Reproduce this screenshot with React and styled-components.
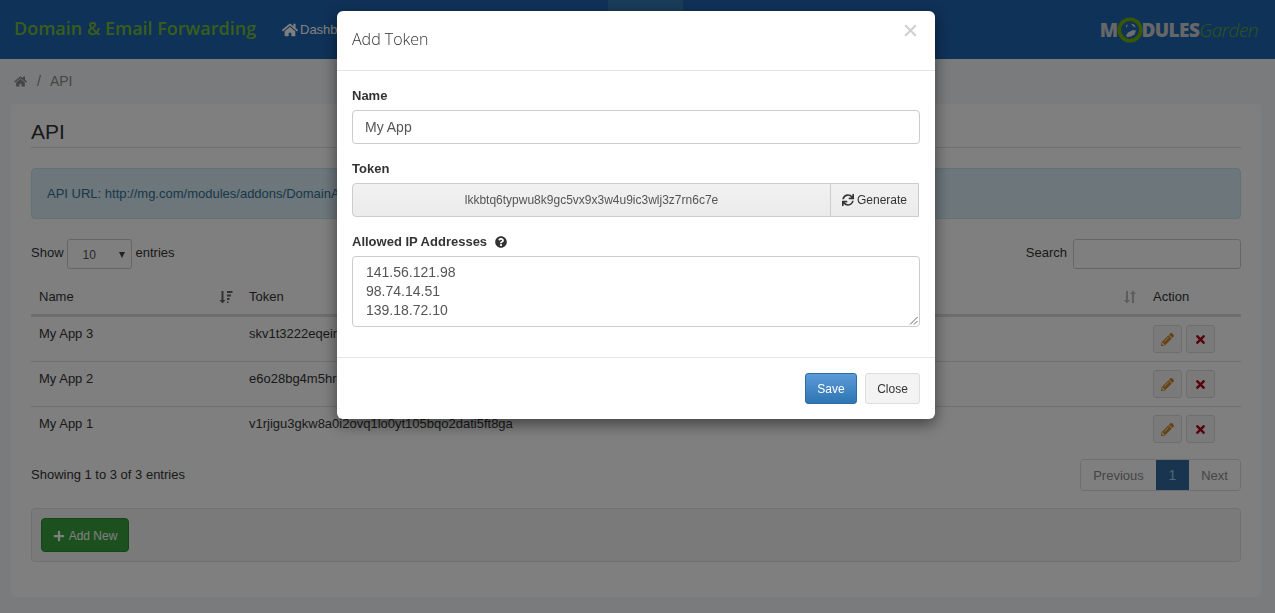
import React from 'react';
import styled, { createGlobalStyle } from 'styled-components';
import { FaHome, FaSync, FaPencilAlt, FaTimes, FaPlus, FaQuestionCircle } from 'react-icons/fa';
import { X } from 'lucide-react';

const GlobalStyle = createGlobalStyle`
  html, body {
    margin: 0;
    padding: 0;
    height: 100%;
    overflow: hidden;
    background: #f5f7fa;
    font-family: "Liberation Sans", Arial, sans-serif;
    font-size: 14px;
    color: #333;
  }
  * { box-sizing: border-box; }
`;

const Page = styled.div`
  height: 613px;
  display: flex;
  flex-direction: column;
`;

const TopBar = styled.header`
  height: 59px;
  flex: none;
  background: #1f64b0;
  display: flex;
  align-items: center;
  padding: 0 16px 0 14px;
`;

const Brand = styled.div`
  font-family: "Open Sans", sans-serif;
  font-weight: 600;
  font-size: 18px;
  color: #76bb36;
  width: 268px;
  flex: none;
  padding-bottom: 3px;
  white-space: nowrap;
`;

const NavList = styled.nav`
  display: flex;
  align-self: stretch;
  flex: 1;
`;

const NavItem = styled.a`
  display: flex;
  align-items: center;
  gap: 2px;
  color: #fff;
  font-size: 13px;
  height: 100%;
  width: ${(p) => p.$width}px;
  margin-left: ${(p) => p.$offset || 0}px;
  background: ${(p) => (p.$active ? '#3479b4' : 'transparent')};
  svg { font-size: 16px; }
`;

const Logo = styled.div`
  display: flex;
  align-items: center;
  flex: none;
  height: 26px;
  margin-right: 1px;
  color: #cfcfcf;
  font-family: "Open Sans", sans-serif;
  font-weight: 800;
  font-size: 19px;
  letter-spacing: -0.6px;
`;

const LogoRing = styled.svg`
  flex: none;
  margin-right: -2px;
`;

const LogoGarden = styled.span`
  color: #6aa82a;
  font-weight: 300;
  font-style: italic;
  font-size: 19px;
  letter-spacing: -0.5px;
`;

const Crumbs = styled.div`
  height: 45px;
  flex: none;
  display: flex;
  align-items: center;
  padding: 0 0 1px 14px;
  gap: 10px;
  color: #8a8a8a;
  font-size: 14px;
`;

const CrumbCurrent = styled.span`
  margin-left: -1px;
`;

const Panel = styled.main`
  margin: 0 14px 0 11px;
  height: 493px;
  flex: none;
  background: #fff;
  border-radius: 4px;
  padding: 0 20px;
`;

const PanelTitle = styled.h1`
  margin: 0;
  height: 44px;
  padding-top: 16px;
  font-size: 21px;
  line-height: 24px;
  font-weight: 400;
  color: #333;
  border-bottom: 1px solid #ddd;
`;

const Alert = styled.div`
  margin-top: 20px;
  height: 51px;
  display: flex;
  align-items: center;
  padding: 0 15px;
  background: #d9edf7;
  border: 1px solid #bce8f1;
  border-radius: 4px;
  color: #31708f;
  font-size: 13px;
`;

const ControlsRow = styled.div`
  margin-top: 20px;
  height: 30px;
  display: flex;
  justify-content: space-between;
  align-items: flex-start;
  font-size: 13px;
  line-height: 27px;
`;

const ControlGroup = styled.label`
  display: flex;
  align-items: flex-start;
  gap: 3px;
`;

const EntriesSelect = styled.div`
  width: 65px;
  height: 30px;
  margin-right: 1px;
  border: 1px solid #ccc;
  border-radius: 3px;
  display: flex;
  align-items: center;
  justify-content: space-between;
  padding: 2px 6px 0 15px;
  font-size: 12px;
  color: #555;
  background: #fff;
`;

const SelectCaret = styled.span`
  width: 0;
  height: 0;
  border-left: 3.5px solid transparent;
  border-right: 3.5px solid transparent;
  border-top: 6px solid #444;
`;

const SearchBox = styled.div`
  width: 168px;
  height: 30px;
  margin-left: 3px;
  border: 1px solid #ccc;
  border-radius: 3px;
  background: #fff;
`;

const TABLE_COLS = '210px 1fr 96px';

const TableHead = styled.div`
  margin-top: 12px;
  height: 36px;
  display: grid;
  grid-template-columns: ${TABLE_COLS};
  align-items: center;
  border-bottom: 3px solid #ddd;
  font-size: 13px;
  padding-bottom: 2px;
`;

const HeadCell = styled.div`
  display: flex;
  align-items: center;
  justify-content: space-between;
  padding: 0 8px;
`;

const SortIcon = styled.svg`
  width: 14px;
  height: 14px;
  flex: none;
  color: ${(p) => (p.$on ? '#666' : '#bbb')};
`;

const TableRow = styled.div`
  height: 45px;
  display: grid;
  grid-template-columns: ${TABLE_COLS};
  border-bottom: 1px solid ${(p) => (p.$last ? 'transparent' : '#ddd')};
  font-size: 13px;
`;

const RowCell = styled.div`
  padding: 9px 8px 0;
  line-height: 16px;
  white-space: nowrap;
  overflow: hidden;
`;

const ActionCell = styled.div`
  display: flex;
  gap: 4px;
  padding: 8px 0 0 8px;
`;

const IconBtn = styled.button`
  width: 29px;
  height: 28px;
  padding: 0;
  display: flex;
  align-items: center;
  justify-content: center;
  background: #f4f4f4;
  border: 1px solid #ddd;
  border-radius: 3px;
  font-size: 13px;
  color: ${(p) => p.$color};
`;

const FooterRow = styled.div`
  margin-top: 7px;
  height: 33px;
  display: flex;
  justify-content: space-between;
  align-items: flex-start;
  font-size: 13px;
  line-height: 31px;
`;

const Pager = styled.div`
  display: flex;
  height: 32px;
  border: 1px solid #ddd;
  border-radius: 4px;
  overflow: hidden;
  background: #fff;
`;

const PagerItem = styled.span`
  display: flex;
  align-items: center;
  justify-content: center;
  width: ${(p) => p.$width}px;
  font-size: 14px;
  color: ${(p) => (p.$active ? '#9fd0f0' : '#8a8a8a')};
  background: ${(p) => (p.$active ? '#33699c' : '#fff')};
`;

const PagerLabel = styled.span`
  font-size: 13px;
`;

const ActionBar = styled.div`
  margin-top: 16px;
  height: 54px;
  padding: 9px;
  background: #f5f5f5;
  border: 1px solid #e3e3e3;
  border-radius: 4px;
`;

const AddButton = styled.button`
  width: 88px;
  height: 34px;
  padding: 2px 0 0;
  display: flex;
  align-items: center;
  justify-content: center;
  gap: 4px;
  background: #38a13f;
  border: 1px solid #2c8a33;
  border-radius: 4px;
  color: #fff;
  font-family: inherit;
  font-size: 12px;
`;

const Backdrop = styled.div`
  position: fixed;
  inset: 0;
  background: rgba(0, 0, 0, 0.5);
`;

const Modal = styled.section`
  position: fixed;
  left: 337px;
  top: 11px;
  width: 598px;
  height: 408px;
  background: #fff;
  border-radius: 6px;
  box-shadow: 0 5px 15px rgba(0, 0, 0, 0.5);
`;

const ModalHeader = styled.div`
  height: 60px;
  display: flex;
  align-items: center;
  justify-content: space-between;
  padding: 0 15px 3px 15px;
  border-bottom: 1px solid #e5e5e5;
`;

const ModalTitle = styled.h2`
  margin: 0;
  font-family: "Open Sans", sans-serif;
  font-weight: 300;
  font-size: 16px;
  color: #333;
`;

const CloseX = styled.span`
  color: #d0d0d0;
  display: flex;
  margin-bottom: 17px;
`;

const ModalBody = styled.div`
  height: 287px;
  padding: 17px 15px 0;
  border-bottom: 1px solid #e5e5e5;
`;

const Field = styled.div`
  margin-bottom: 17px;
`;

const FieldLabel = styled.div`
  display: flex;
  align-items: center;
  gap: 8px;
  font-weight: 700;
  font-size: 13px;
  line-height: 16px;
  margin-bottom: 6px;
  color: #333;
`;

const TextInput = styled.div`
  height: 34px;
  width: 568px;
  display: flex;
  align-items: center;
  padding: 0 12px;
  border: 1px solid #ccc;
  border-radius: 4px;
  font-size: 14px;
  color: #555;
`;

const TokenGroup = styled.div`
  height: 34px;
  width: 567px;
  display: flex;
  background: linear-gradient(#f1f1f1, #ebebeb);
  border: 1px solid #ccc;
  border-radius: 4px 0 0 4px;
`;

const TokenValue = styled.div`
  flex: 1;
  display: flex;
  align-items: center;
  justify-content: center;
  font-size: 12px;
  color: #555;
`;

const GenerateBtn = styled.div`
  width: 88px;
  display: flex;
  align-items: center;
  justify-content: center;
  gap: 3px;
  border-left: 1px solid #ccc;
  font-size: 12px;
  color: #333;
  svg { font-size: 12px; }
`;

const AddressBox = styled.div`
  position: relative;
  width: 568px;
  height: 71px;
  padding: 6px 13px;
  border: 1px solid #ccc;
  border-radius: 4px;
  font-size: 14px;
  line-height: 19px;
  color: #555;
  white-space: pre-line;
`;

const ResizeGrip = styled.svg`
  position: absolute;
  right: 1px;
  bottom: 1px;
  width: 9px;
  height: 9px;
`;

const ModalFooter = styled.div`
  display: flex;
  justify-content: flex-end;
  gap: 8px;
  padding: 15px 15px 0;
`;

const FooterBtn = styled.button`
  height: 31px;
  width: ${(p) => p.$width}px;
  padding: 0;
  font-family: inherit;
  font-size: 12px;
  border-radius: 3px;
  color: ${(p) => (p.$primary ? '#fff' : '#333')};
  border: 1px solid ${(p) => (p.$primary ? '#2e6da4' : '#ddd')};
  background: ${(p) => (p.$primary ? 'linear-gradient(#5a9bd8, #2f75b3)' : '#f3f3f3')};
`;

const SortBoth = ({ on }) => (
  <SortIcon viewBox="0 0 14 14" $on={on} fill="currentColor">
    <path d="M3 1h2v9h2l-3 3.5L1 10h2zM10 .5l3 3.5h-2v9H9V4H7z" />
  </SortIcon>
);

const SortName = () => (
  <SortIcon viewBox="0 0 14 14" $on fill="currentColor">
    <path d="M2.5 1h2v9h2l-3 3.5L.5 10h2zM8 1h5.5v2H8zM8 4.5h4v2H8zM8 8h2.5v2H8zM8 11.5h1.5v1.5H8z" />
  </SortIcon>
);

const rows = [
  { name: 'My App 3', token: 'skv1t3222eqeirl8c0xu4m7hp2dn6ya9wb5tfg1j' },
  { name: 'My App 2', token: 'e6o28bg4m5hrq1vz7kxa3ti9nd0lsu2wy6cjp8f' },
  { name: 'My App 1', token: 'v1rjigu3gkw8a0i2ovq1lo0yt105bqo2dati5ft8ga' },
];

const App = () => (
  <>
    <GlobalStyle />
    <Page>
      <TopBar>
        <Brand>Domain &amp; Email Forwarding</Brand>
        <NavList>
          <NavItem $width={100}><FaHome />Dashboard</NavItem>
          <NavItem $width={75} $offset={226} $active />
        </NavList>
        <Logo>
          M
          <LogoRing width="26" height="26" viewBox="0 0 26 26">
            <circle cx="13" cy="13" r="10.8" fill="#1f64b0" stroke="#6fb000" strokeWidth="3.6" />
            <path d="M9 18.5l2-3 5-2.5 3 .5-1.5 4-3.5 2-4 .5z M14 6.5l3 1 2 3-3-1.2z M9 8.5l2-1-1.5 3.5z" fill="#dcdcdc" />
          </LogoRing>
          DULES
          <LogoGarden>Garden</LogoGarden>
        </Logo>
      </TopBar>
      <Crumbs>
        <FaHome size={13} />
        <span>/</span>
        <CrumbCurrent>API</CrumbCurrent>
      </Crumbs>
      <Panel>
        <PanelTitle>API</PanelTitle>
        <Alert>API URL: http://mg.com/modules/addons/DomainAndEmailForwarding/api</Alert>
        <ControlsRow>
          <ControlGroup>
            Show
            <EntriesSelect>10<SelectCaret /></EntriesSelect>
            entries
          </ControlGroup>
          <ControlGroup>
            Search
            <SearchBox />
          </ControlGroup>
        </ControlsRow>
        <TableHead>
          <HeadCell>Name<SortName /></HeadCell>
          <HeadCell>Token<SortBoth /></HeadCell>
          <HeadCell>Action</HeadCell>
        </TableHead>
        {rows.map((row, i) => (
          <TableRow key={row.name} $last={i === rows.length - 1}>
            <RowCell>{row.name}</RowCell>
            <RowCell>{row.token}</RowCell>
            <ActionCell>
              <IconBtn $color="#cf8522"><FaPencilAlt /></IconBtn>
              <IconBtn $color="#ad0618"><FaTimes /></IconBtn>
            </ActionCell>
          </TableRow>
        ))}
        <FooterRow>
          <span>Showing 1 to 3 of 3 entries</span>
          <Pager>
            <PagerItem $width={75}><PagerLabel>Previous</PagerLabel></PagerItem>
            <PagerItem $width={33} $active>1</PagerItem>
            <PagerItem $width={51}><PagerLabel>Next</PagerLabel></PagerItem>
          </Pager>
        </FooterRow>
        <ActionBar>
          <AddButton><FaPlus size={12} />Add New</AddButton>
        </ActionBar>
      </Panel>
    </Page>
    <Backdrop />
    <Modal>
      <ModalHeader>
        <ModalTitle>Add Token</ModalTitle>
        <CloseX><X size={19} strokeWidth={2.6} /></CloseX>
      </ModalHeader>
      <ModalBody>
        <Field>
          <FieldLabel>Name</FieldLabel>
          <TextInput>My App</TextInput>
        </Field>
        <Field>
          <FieldLabel>Token</FieldLabel>
          <TokenGroup>
            <TokenValue>lkkbtq6typwu8k9gc5vx9x3w4u9ic3wlj3z7rn6c7e</TokenValue>
            <GenerateBtn><FaSync />Generate</GenerateBtn>
          </TokenGroup>
        </Field>
        <Field>
          <FieldLabel>Allowed IP Addresses <FaQuestionCircle size={12} /></FieldLabel>
          <AddressBox>
            {'141.56.121.98\n98.74.14.51\n139.18.72.10'}
            <ResizeGrip viewBox="0 0 9 9" stroke="#666" strokeWidth="1">
              <path d="M1 8.5L8.5 1M5 8.5L8.5 5" />
            </ResizeGrip>
          </AddressBox>
        </Field>
      </ModalBody>
      <ModalFooter>
        <FooterBtn $primary $width={52}>Save</FooterBtn>
        <FooterBtn $width={55}>Close</FooterBtn>
      </ModalFooter>
    </Modal>
  </>
);

export default App;
